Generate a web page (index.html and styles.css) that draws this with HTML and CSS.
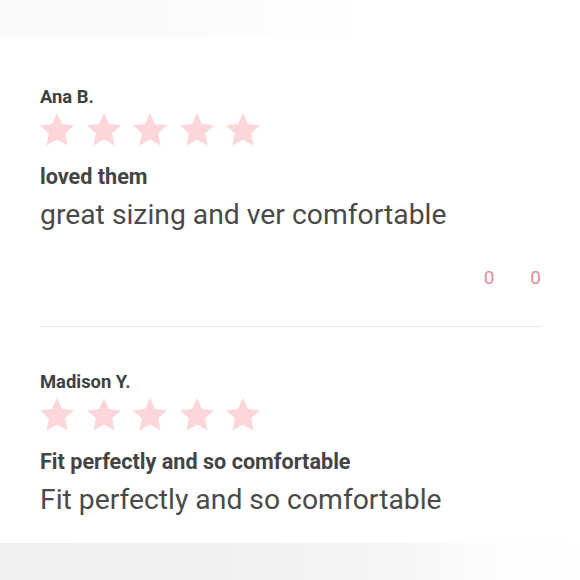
FILE: index.html
```html
<!DOCTYPE html>
<html>
<head>
<meta charset="utf-8">
<link rel="stylesheet" href="styles.css">
</head>
<body>
<div class="page">
  <div class="top-band"></div>
  <div class="reviews">
    <div class="review">
      <div class="name">Ana B.</div>
      <div class="stars">
        <svg class="star" viewBox="1.5 1.5 21 20"><polygon points="12,1.5 15.1,8.3 22.5,9.1 17,14.1 18.5,21.5 12,17.8 5.5,21.5 7,14.1 1.5,9.1 8.9,8.3"/></svg>
        <svg class="star" viewBox="1.5 1.5 21 20"><polygon points="12,1.5 15.1,8.3 22.5,9.1 17,14.1 18.5,21.5 12,17.8 5.5,21.5 7,14.1 1.5,9.1 8.9,8.3"/></svg>
        <svg class="star" viewBox="1.5 1.5 21 20"><polygon points="12,1.5 15.1,8.3 22.5,9.1 17,14.1 18.5,21.5 12,17.8 5.5,21.5 7,14.1 1.5,9.1 8.9,8.3"/></svg>
        <svg class="star" viewBox="1.5 1.5 21 20"><polygon points="12,1.5 15.1,8.3 22.5,9.1 17,14.1 18.5,21.5 12,17.8 5.5,21.5 7,14.1 1.5,9.1 8.9,8.3"/></svg>
        <svg class="star" viewBox="1.5 1.5 21 20"><polygon points="12,1.5 15.1,8.3 22.5,9.1 17,14.1 18.5,21.5 12,17.8 5.5,21.5 7,14.1 1.5,9.1 8.9,8.3"/></svg>
      </div>
      <div class="title">loved them</div>
      <div class="body">great sizing and ver comfortable</div>
      <div class="votes"><span>0</span><span>0</span></div>
      <div class="divider"></div>
    </div>
    <div class="review">
      <div class="name">Madison Y.</div>
      <div class="stars">
        <svg class="star" viewBox="1.5 1.5 21 20"><polygon points="12,1.5 15.1,8.3 22.5,9.1 17,14.1 18.5,21.5 12,17.8 5.5,21.5 7,14.1 1.5,9.1 8.9,8.3"/></svg>
        <svg class="star" viewBox="1.5 1.5 21 20"><polygon points="12,1.5 15.1,8.3 22.5,9.1 17,14.1 18.5,21.5 12,17.8 5.5,21.5 7,14.1 1.5,9.1 8.9,8.3"/></svg>
        <svg class="star" viewBox="1.5 1.5 21 20"><polygon points="12,1.5 15.1,8.3 22.5,9.1 17,14.1 18.5,21.5 12,17.8 5.5,21.5 7,14.1 1.5,9.1 8.9,8.3"/></svg>
        <svg class="star" viewBox="1.5 1.5 21 20"><polygon points="12,1.5 15.1,8.3 22.5,9.1 17,14.1 18.5,21.5 12,17.8 5.5,21.5 7,14.1 1.5,9.1 8.9,8.3"/></svg>
        <svg class="star" viewBox="1.5 1.5 21 20"><polygon points="12,1.5 15.1,8.3 22.5,9.1 17,14.1 18.5,21.5 12,17.8 5.5,21.5 7,14.1 1.5,9.1 8.9,8.3"/></svg>
      </div>
      <div class="title">Fit perfectly and so comfortable</div>
      <div class="body">Fit perfectly and so comfortable</div>
    </div>
  </div>
  <div class="bottom-band"></div>
</div>
</body>
</html>
```
FILE: styles.css
```css
html, body {
  margin: 0;
  padding: 0;
  background: #ffffff;
}
.page {
  width: 580px;
  height: 580px;
  overflow: hidden;
  display: flex;
  flex-direction: column;
  font-family: Roboto, "Liberation Sans", sans-serif;
  color: #444444;
}
.top-band {
  height: 37px;
  flex: none;
  background: linear-gradient(90deg, #fafafa 0%, #fbfbfb 30%, #fdfdfd 45%, #ffffff 60%);
}
.reviews {
  padding: 5px 39px 0 40px;
  flex: 1;
}
.review {
  padding-top: 45px;
}
.name {
  font-size: 18.4px;
  font-weight: 700;
  line-height: 20px;
  color: #3f3f3f;
}
.stars {
  display: flex;
  gap: 12.5px;
  margin-top: 6px;
  height: 33px;
  align-items: center;
}
.star {
  width: 34px;
  height: 32.4px;
  fill: #fcd6d9;
  flex: none;
}
.title {
  margin-top: 19px;
  font-size: 21.6px;
  font-weight: 700;
  line-height: 24px;
  color: #444444;
}
.body {
  margin-top: 11px;
  font-size: 28.3px;
  font-weight: 400;
  line-height: 30px;
  color: #4a4a4a;
}
.votes {
  margin-top: 37px;
  display: flex;
  justify-content: flex-end;
  gap: 36px;
  font-size: 19px;
  line-height: 22px;
  color: #e48a9f;
}
.divider {
  margin-top: 37px;
  height: 1px;
  background: #e6e6e6;
}
.bottom-band {
  height: 37px;
  flex: none;
  background: linear-gradient(90deg, #efefef 0%, #f1f1f1 40%, #f6f6f6 70%, #fdfdfd 85%, #ffffff 100%);
}
```
